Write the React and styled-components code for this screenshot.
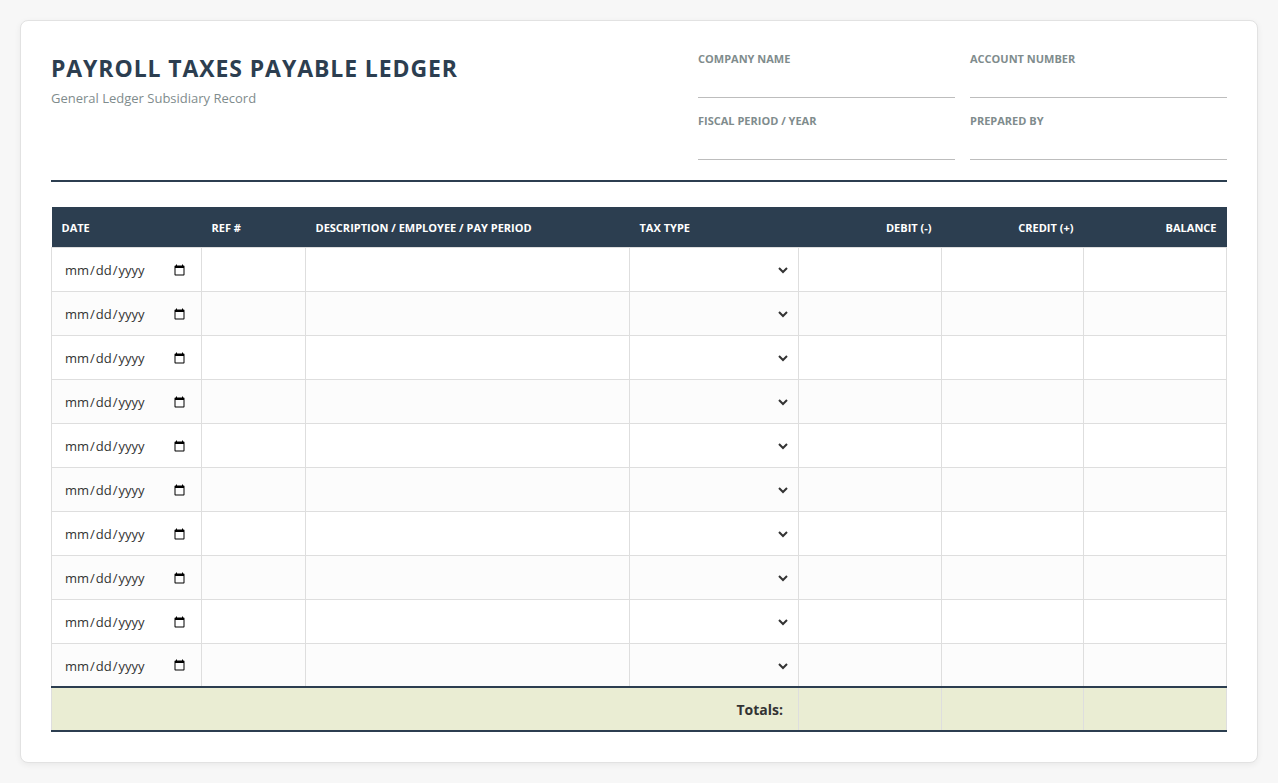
import React from 'react'
import styled, { createGlobalStyle } from 'styled-components'

const GlobalStyle = createGlobalStyle`
    * {
        box-sizing: border-box;
    }
    body {
        margin: 0;
        background: #f7f7f7;
        font-family: 'Segoe UI', 'Open Sans', 'Noto Sans', sans-serif;
        color: #333;
    }
`

const Page = styled.div`
    padding: 20px;
`

const Sheet = styled.div`
    background: #fff;
    border: 1px solid #e2e2e2;
    border-radius: 8px;
    box-shadow: 0 2px 6px rgba(0, 0, 0, 0.06);
    padding: 31px 30px 30px 30px;
`

const Header = styled.header`
    display: flex;
    justify-content: space-between;
    align-items: flex-start;
    padding-bottom: 20px;
    border-bottom: 2px solid #2c3e50;
    margin-bottom: 25px;
`

const TitleBlock = styled.div`
    padding-top: 1px;
    h1 {
        margin: 0;
        font-size: 23px;
        font-weight: 700;
        color: #2c3e50;
        letter-spacing: 0.9px;
        line-height: 30px;
    }
    p {
        margin: 6px 0 0;
        font-size: 13px;
        color: #7f8c8d;
    }
`

const MetaGrid = styled.div`
    width: 529px;
    display: grid;
    grid-template-columns: 1fr 1fr;
    column-gap: 15px;
    row-gap: 16px;
`

const Field = styled.label`
    display: flex;
    flex-direction: column;
    span {
        font-size: 11px;
        font-weight: 700;
        color: #7f8c8d;
        text-transform: uppercase;
        line-height: 14px;
    }
    input {
        border: none;
        border-bottom: 1px solid #bdbdbd;
        height: 32px;
        margin-top: 0;
        outline: none;
        font: inherit;
        font-size: 13px;
        background: transparent;
    }
`

const Table = styled.table`
    width: 100%;
    border-collapse: collapse;
    table-layout: fixed;
`

const Th = styled.th`
    background: #2c3e50;
    color: #fff;
    font-size: 11px;
    font-weight: 700;
    text-transform: uppercase;
    text-align: ${(p) => (p.$right ? 'right' : 'left')};
    height: 40px;
    padding: 1px 10px 0;
`

const Row = styled.tr`
    &:nth-child(even) {
        background: #fcfcfc;
    }
`

const Td = styled.td`
    border: 1px solid #dedede;
    height: 44px;
    padding: 6px 5px 4px;
`

const CellInput = styled.input`
    width: 100%;
    border: none;
    background: transparent;
    outline: none;
    font-family: inherit;
    font-size: 13px;
    padding: 6px 8px 6px 7px;
    color: #333;
    text-align: ${(p) => (p.$right ? 'right' : 'left')};
`

const CellSelect = styled.select`
    width: calc(100% - 2px);
    border: none;
    background: transparent;
    outline: none;
    font-family: inherit;
    font-size: 13px;
    padding: 6px 6px 6px 4px;
    color: #333;
`

const TotalsRow = styled.tr`
    background: #eaedd3;
    td {
        height: 44px;
        border-top: 2px solid #2c3e50;
        border-bottom: 2px solid #2c3e50;
        border-left: 1px solid #dedede;
        border-right: 1px solid #dedede;
    }
`

const TotalsLabel = styled.td`
    text-align: right;
    font-weight: 700;
    font-size: 14px;
    color: #333;
    padding: 0 15px;
`

const columns = [
    { label: 'Date', width: 150 },
    { label: 'Ref #', width: 104 },
    { label: 'Description / Employee / Pay Period', width: 324 },
    { label: 'Tax Type', width: 169 },
    { label: 'Debit (-)', width: 143, right: true },
    { label: 'Credit (+)', width: 142, right: true },
    { label: 'Balance', width: 143, right: true },
]

const rows = Array.from({ length: 10 }, (_, i) => i)

function App() {
    return (
        <>
            <GlobalStyle />
            <Page>
                <Sheet>
                    <Header>
                        <TitleBlock>
                            <h1>PAYROLL TAXES PAYABLE LEDGER</h1>
                            <p>General Ledger Subsidiary Record</p>
                        </TitleBlock>
                        <MetaGrid>
                            <Field>
                                <span>Company Name</span>
                                <input type="text" />
                            </Field>
                            <Field>
                                <span>Account Number</span>
                                <input type="text" />
                            </Field>
                            <Field>
                                <span>Fiscal Period / Year</span>
                                <input type="text" />
                            </Field>
                            <Field>
                                <span>Prepared By</span>
                                <input type="text" />
                            </Field>
                        </MetaGrid>
                    </Header>

                    <Table>
                        <colgroup>
                            {columns.map((c) => (
                                <col key={c.label} style={{ width: c.width }} />
                            ))}
                        </colgroup>
                        <thead>
                            <tr>
                                {columns.map((c) => (
                                    <Th key={c.label} $right={c.right}>
                                        {c.label}
                                    </Th>
                                ))}
                            </tr>
                        </thead>
                        <tbody>
                            {rows.map((i) => (
                                <Row key={i}>
                                    <Td>
                                        <CellInput type="date" />
                                    </Td>
                                    <Td>
                                        <CellInput type="text" />
                                    </Td>
                                    <Td>
                                        <CellInput type="text" />
                                    </Td>
                                    <Td>
                                        <CellSelect defaultValue="">
                                            <option value=""></option>
                                            <option>Federal Income Tax</option>
                                            <option>Social Security</option>
                                            <option>Medicare</option>
                                            <option>State Income Tax</option>
                                            <option>FUTA</option>
                                            <option>SUTA</option>
                                        </CellSelect>
                                    </Td>
                                    <Td>
                                        <CellInput type="text" $right />
                                    </Td>
                                    <Td>
                                        <CellInput type="text" $right />
                                    </Td>
                                    <Td>
                                        <CellInput type="text" $right />
                                    </Td>
                                </Row>
                            ))}
                            <TotalsRow>
                                <TotalsLabel colSpan={4}>Totals:</TotalsLabel>
                                <td />
                                <td />
                                <td />
                            </TotalsRow>
                        </tbody>
                    </Table>
                </Sheet>
            </Page>
        </>
    )
}

export default App
